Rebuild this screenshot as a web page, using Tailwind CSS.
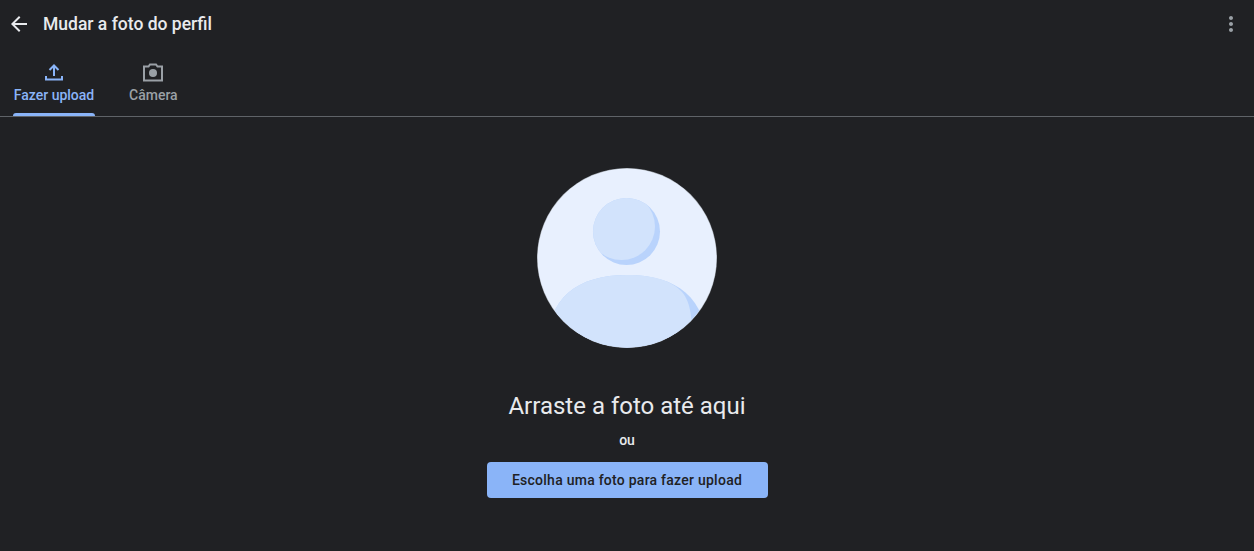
<!DOCTYPE html>
<html lang="pt">
<head>
<meta charset="utf-8">
<title>Mudar a foto do perfil</title>
<script src="https://cdn.jsdelivr.net/npm/@tailwindcss/browser@4"></script>
</head>
<body class="m-0 h-[551px] w-[1254px] overflow-hidden bg-[#202124] font-['Roboto','Noto_Sans',sans-serif] text-[#e8eaed]">
  <header class="flex h-12 items-center pl-[7px] pr-[11px]">
    <button class="flex h-6 w-6 items-center justify-center text-[#e8eaed]" aria-label="Voltar">
      <svg width="24" height="24" viewBox="0 0 24 24" fill="currentColor"><path d="M20 11H7.83l5.59-5.59L12 4l-8 8 8 8 1.41-1.41L7.83 13H20v-2z"/></svg>
    </button>
    <h1 class="ml-3 text-[17.5px] font-medium leading-6 text-[#e8eaed]">Mudar a foto do perfil</h1>
    <button class="ml-auto flex h-6 w-6 items-center justify-center text-[#9aa0a6]" aria-label="Mais opções">
      <svg width="24" height="24" viewBox="0 0 24 24" fill="currentColor"><path d="M12 8c1.1 0 2-.9 2-2s-.9-2-2-2-2 .9-2 2 .9 2 2 2zm0 2c-1.1 0-2 .9-2 2s.9 2 2 2 2-.9 2-2-.9-2-2-2zm0 6c-1.1 0-2 .9-2 2s.9 2 2 2 2-.9 2-2-.9-2-2-2z" transform="translate(0 0)"/></svg>
    </button>
  </header>
  <nav class="flex h-[69px] items-stretch gap-[32px] border-b border-[#5f6368] pl-[11px]">
    <div class="relative flex w-[86px] flex-col items-center pt-[12px] text-[#8ab4f8]">
      <svg width="24" height="24" viewBox="0 0 24 24" fill="none" stroke="currentColor" stroke-width="2"><path d="M4 16v3.5h16V16"/><path d="M12 16V6"/><path d="M7.5 10 12 5.5l4.500 4.500"/></svg>
      <span class="mt-[1px] text-[14px] font-medium leading-5">Fazer upload</span>
      <span class="absolute bottom-0 left-[2px] right-[2px] h-[3px] rounded-t-[3px] bg-[#8ab4f8]"></span>
    </div>
    <div class="flex flex-col items-center pt-[12px] text-[#9aa0a6]">
      <svg width="24" height="24" viewBox="0 0 24 24" fill="none"><path d="M9 4.500h6l1.500 2H21v14H3v-14h4.500z" stroke="currentColor" stroke-width="2"/><circle cx="12" cy="13" r="4" fill="currentColor"/></svg>
      <span class="mt-[1px] text-[14px] font-medium leading-5">Câmera</span>
    </div>
  </nav>
  <main class="flex flex-col items-center pt-[51px]">
    <svg width="180" height="180" viewBox="0 0 180 180" class="block">
      <defs>
        <clipPath id="disc"><circle cx="90" cy="90" r="89.500"/></clipPath>
        <clipPath id="head"><circle cx="89.500" cy="63.500" r="33.500"/></clipPath>
      </defs>
      <circle cx="90" cy="90" r="90" fill="#9aa0a6"/>
      <circle cx="90" cy="90" r="89.500" fill="#e8f0fe"/>
      <circle cx="89.500" cy="63.500" r="33.500" fill="#b9d3fc"/>
      <g clip-path="url(#head)"><circle cx="84.500" cy="58.500" r="33.500" fill="#d2e3fc"/></g>
      <g clip-path="url(#disc)">
        <path d="M10 180C10 130 40 107 90 107s80 23 80 73z" fill="#b9d3fc"/>
        <path d="M10 180C10 130 40 107 90 107c30 0 46 7 55 17 9 10 11 30 10 56z" fill="#d2e3fc"/>
      </g>
    </svg>
    <h2 class="mt-[44px] text-[24px] font-normal leading-[28px] text-[#e8eaed]">Arraste a foto até aqui</h2>
    <p class="mt-[10px] text-[14px] font-medium leading-5 text-[#e8eaed]">ou</p>
    <button class="mt-[12px] flex h-9 w-[281px] items-center justify-center rounded bg-[#8ab4f8] text-[14px] font-medium tracking-[0.25px] text-[#202124]">Escolha uma foto para fazer upload</button>
  </main>
</body>
</html>
